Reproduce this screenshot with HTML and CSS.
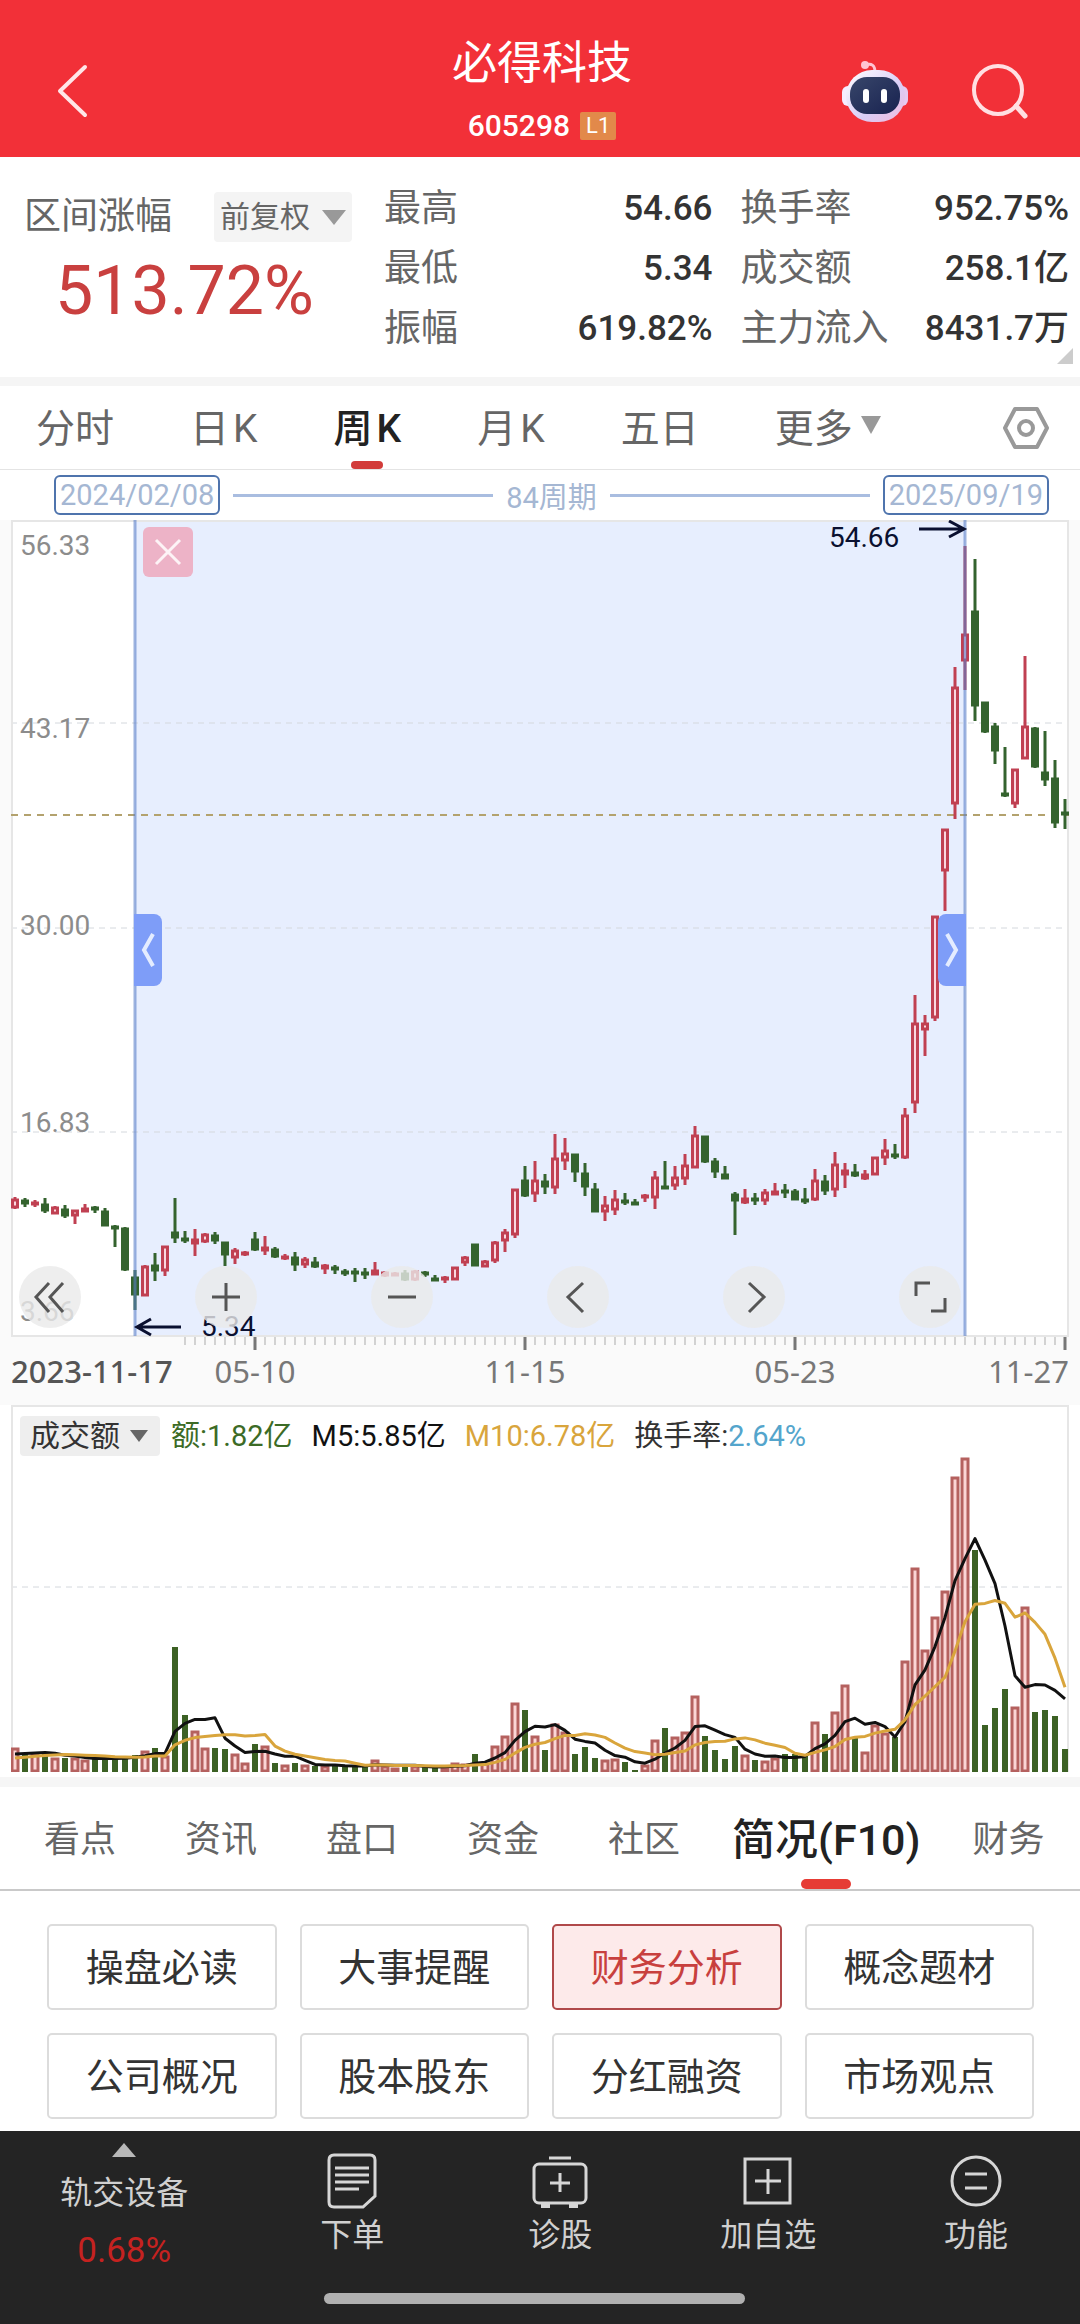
FILE: index.html
```html
<!DOCTYPE html>
<html lang="zh-CN">
<head>
  <meta charset="UTF-8">
  <meta name="viewport" content="width=device-width, initial-scale=1">
  <title>必得科技 605298</title>
  <link rel="stylesheet" href="styles.css">
</head>
<body>

<header class="header">
  <button class="icon-btn back" aria-label="返回">
    <svg width="32" height="54" viewBox="0 0 32 54"><path d="M29 3 L4 27 L29 51" fill="none" stroke="#ffe6e8" stroke-width="4" stroke-linecap="round" stroke-linejoin="round"/></svg>
  </button>
  <div class="title">
    <h1>必得科技</h1>
    <div class="code">605298 <span class="level">L1</span></div>
  </div>
  <div class="header-right">
    <button class="icon-btn" aria-label="智能助手">
      <svg width="70" height="66" viewBox="0 0 70 66">
        <defs>
          <linearGradient id="shell" x1="0" y1="0" x2="1" y2="1"><stop offset="0" stop-color="#fff"/><stop offset=".6" stop-color="#d9cdf6"/><stop offset="1" stop-color="#f3b9dc"/></linearGradient>
          <linearGradient id="visor" x1="0" y1="0" x2="1" y2="1"><stop offset="0" stop-color="#38466a"/><stop offset="1" stop-color="#182250"/></linearGradient>
        </defs>
        <path d="M26 7 C31 5 35 7 35 14" fill="none" stroke="#ffc4d4" stroke-width="3"/>
        <circle cx="25" cy="7" r="4" fill="#ffc4d4"/>
        <rect x="2" y="28" width="12" height="20" rx="6" fill="#f6ecff"/>
        <rect x="56" y="28" width="12" height="20" rx="6" fill="#e6c9f0"/>
        <rect x="6" y="12" width="59" height="52" rx="26" fill="url(#shell)"/>
        <rect x="10" y="19" width="50" height="37" rx="17" fill="url(#visor)"/>
        <rect x="23" y="31" width="6" height="14" rx="3" fill="#fff"/>
        <rect x="41" y="31" width="6" height="14" rx="3" fill="#fff"/>
      </svg>
    </button>
    <button class="icon-btn" aria-label="搜索">
      <svg width="58" height="58" viewBox="0 0 58 58"><circle cx="28" cy="28" r="24" fill="none" stroke="#ffdfe2" stroke-width="4"/><path d="M46 44 L55 54" stroke="#ffdfe2" stroke-width="5" stroke-linecap="round"/></svg>
    </button>
  </div>
</header>

<section class="summary">
  <div class="range">
    <div class="range-top">
      <span class="label">区间涨幅</span>
      <label class="picker adjust"><select aria-label="复权方式"><option>前复权</option></select></label>
    </div>
    <div class="range-value">513.72%</div>
  </div>
  <dl class="stats">
    <div><dt>最高</dt><dd>54.66</dd></div>
    <div><dt>换手率</dt><dd>952.75%</dd></div>
    <div><dt>最低</dt><dd>5.34</dd></div>
    <div><dt>成交额</dt><dd>258.1亿</dd></div>
    <div><dt>振幅</dt><dd>619.82%</dd></div>
    <div><dt>主力流入</dt><dd>8431.7万</dd></div>
  </dl>
  <i class="corner"></i>
</section>

<nav class="periods">
  <button>分时</button>
  <button>日<span>K</span></button>
  <button class="active">周<span>K</span></button>
  <button>月<span>K</span></button>
  <button>五日</button>
  <button class="more">更多</button>
  <button class="settings" aria-label="图表设置">
    <svg width="46" height="44" viewBox="0 0 46 44" fill="none" stroke="#999" stroke-width="4" stroke-linejoin="round"><path d="M12 3 H34 L44 22 L34 41 H12 L2 22 Z"/><circle cx="23" cy="22" r="7"/></svg>
  </button>
</nav>

<div class="interval">
  <span class="date">2024/02/08</span>
  <i></i>
  <span class="count">84周期</span>
  <i></i>
  <span class="date">2025/09/19</span>
</div>

<section class="kline">
  <div class="plot">
    <svg id="price" viewBox="0 0 1058 830"></svg>
    <button class="close" aria-label="关闭区间">
      <svg width="28" height="28" viewBox="0 0 28 28"><path d="M2 2 L26 26 M26 2 L2 26" stroke="#fdf3f6" stroke-width="3"/></svg>
    </button>
    <button class="handle handle-left" aria-label="区间起点">
      <svg width="14" height="36" viewBox="0 0 14 36"><path d="M12 2 L3 18 L12 34" fill="none" stroke="#e4ecff" stroke-width="4"/></svg>
    </button>
    <button class="handle handle-right" aria-label="区间终点">
      <svg width="14" height="36" viewBox="0 0 14 36"><path d="M2 2 L11 18 L2 34" fill="none" stroke="#e4ecff" stroke-width="4"/></svg>
    </button>
    <div class="tools">
      <button aria-label="最早"><svg viewBox="0 0 62 62"><path d="M30 17 L17 31 L30 46 M44 17 L31 31 L44 46"/></svg></button>
      <button aria-label="放大"><svg viewBox="0 0 62 62"><path d="M17 31 H45 M31 17 V45"/></svg></button>
      <button aria-label="缩小"><svg viewBox="0 0 62 62"><path d="M17 31 H45"/></svg></button>
      <button aria-label="左移"><svg viewBox="0 0 62 62"><path d="M36 17 L21 31 L36 46"/></svg></button>
      <button aria-label="右移"><svg viewBox="0 0 62 62"><path d="M26 17 L41 31 L26 46"/></svg></button>
      <button aria-label="全屏"><svg viewBox="0 0 62 62"><path d="M17 30 V17 H31 M46 32 V45 H32"/></svg></button>
    </div>
  </div>
  <div class="dates">
    <b>2023-11-17</b><span>05-10</span><span>11-15</span><span>05-23</span><span>11-27</span>
  </div>
</section>

<section class="volume">
  <div class="legend">
    <label class="picker kind"><select aria-label="指标"><option>成交额</option></select></label>
    <span class="green">额:1.82亿</span>
    <span class="black">M5:5.85亿</span>
    <span class="gold">M10:6.78亿</span>
    <span>换手率:<em>2.64%</em></span>
  </div>
  <svg id="vol" viewBox="0 0 1058 317"></svg>
</section>

<nav class="tabs">
  <a href="#">看点</a>
  <a href="#">资讯</a>
  <a href="#">盘口</a>
  <a href="#">资金</a>
  <a href="#">社区</a>
  <a href="#" class="active">简况(F10)</a>
  <a href="#">财务</a>
</nav>

<section class="f10">
  <button>操盘必读</button>
  <button>大事提醒</button>
  <button class="active">财务分析</button>
  <button>概念题材</button>
  <button>公司概况</button>
  <button>股本股东</button>
  <button>分红融资</button>
  <button>市场观点</button>
</section>

<footer class="bottom">
  <div class="bottom-row">
    <button class="sector">
      <i></i>
      <span>轨交设备</span>
      <strong>0.68%</strong>
    </button>
    <button>
      <svg width="56" height="56" viewBox="0 0 56 56"><path d="M10 2 H46 Q51 2 51 7 V43 L39 54 H10 Q5 54 5 49 V7 Q5 2 10 2 Z M11 15 H45 M11 22 H45 M11 29 H45 M11 36 H35"/></svg>
      <span>下单</span>
    </button>
    <button>
      <svg width="56" height="56" viewBox="0 0 56 56"><path d="M17 5 H39 M28 20 V39 M18 30 H38"/><rect x="2" y="11" width="52" height="39" rx="5"/><path d="M9 53 H18 M37 53 H46" stroke-width="4"/></svg>
      <span>诊股</span>
    </button>
    <button>
      <svg width="56" height="56" viewBox="0 0 56 56"><rect x="5" y="6" width="45" height="44"/><path d="M28 16 V41 M15 28 H41"/></svg>
      <span>加自选</span>
    </button>
    <button>
      <svg width="56" height="56" viewBox="0 0 56 56"><circle cx="28" cy="28" r="24"/><path d="M17 21 H39 M17 35 H39"/></svg>
      <span>功能</span>
    </button>
  </div>
  <div class="home-bar"></div>
</footer>

<script src="chart.js"></script>
</body>
</html>
```
FILE: styles.css
```css
* { box-sizing: border-box; }
body {
  margin: 0;
  background: #fff;
  color: #333;
  font-family: Roboto, "Noto Sans CJK SC", sans-serif;
}
button, select {
  font: inherit;
  color: inherit;
  background: none;
  border: none;
  padding: 0;
  cursor: pointer;
}
svg { display: block; }

.header {
  display: grid;
  grid-template-columns: 1fr auto 1fr;
  align-items: center;
  height: 157px;
  padding: 24px 52px 0 56px;
  background: #f23038;
  color: #fff;
}
.back { justify-self: start; }
.title { padding-top: 6px; text-align: center; }
.title h1 {
  margin: 0;
  font-size: 45px;
  line-height: 64px;
  font-weight: 400;
}
.code {
  display: flex;
  align-items: center;
  justify-content: center;
  gap: 10px;
  font-size: 30px;
  line-height: 60px;
  font-weight: 500;
}
.level {
  padding: 0 6px;
  font-size: 22px;
  line-height: 28px;
  font-weight: 400;
  background: #e2894a;
  border-radius: 2px;
}
.header-right {
  display: flex;
  align-items: center;
  justify-content: flex-end;
  gap: 60px;
}

.summary {
  position: relative;
  display: flex;
  height: 229px;
  padding: 22px 11px 0 24px;
  border-bottom: 9px solid #f5f5f5;
}
.range { width: 328px; padding-top: 12px; }
.range-top {
  display: flex;
  align-items: center;
  justify-content: space-between;
}
.label { font-size: 37px; line-height: 52px; color: #666; }
.picker { display: flex; align-items: center; background: #f4f4f4; border-radius: 4px; }
.picker select { appearance: none; }
.picker::after {
  content: "";
  border: 12px solid transparent;
  border-top: 15px solid #999;
  border-bottom: 0;
}
.adjust {
  gap: 12px;
  padding: 0 6px;
  font-size: 30px;
  line-height: 50px;
  color: #666;
}
.range-value {
  padding-left: 31px;
  font-size: 68px;
  line-height: 96px;
  color: #c9403f;
}
.stats {
  flex: 1;
  display: grid;
  grid-template-columns: 1fr 1fr;
  column-gap: 28px;
  align-content: start;
  margin: 0 0 0 32px;
}
.stats div { display: flex; justify-content: space-between; line-height: 60px; white-space: nowrap; }
.stats dt { font-size: 37px; color: #666; }
.stats dd { margin: 0; font-size: 35px; font-weight: 500; }
.corner {
  position: absolute;
  right: 7px;
  bottom: 13px;
  border-left: 16px solid transparent;
  border-bottom: 16px solid #ccc;
}

.periods {
  display: flex;
  gap: 76px;
  height: 84px;
  padding: 0 31px 0 36px;
  border-bottom: 1px solid #e4e4e4;
  font-size: 39px;
  color: #666;
}
.periods button { position: relative; padding-bottom: 5px; white-space: nowrap; }
.periods span { margin-left: 4px; }
.periods .active { color: #222; font-weight: 500; }
.periods .active::after {
  content: "";
  position: absolute;
  left: 50%;
  bottom: 0;
  width: 32px;
  height: 8px;
  margin-left: -16px;
  border-radius: 4px;
  background: #d23c3a;
}
.more { display: flex; align-items: center; gap: 8px; }
.more::after {
  content: "";
  border: 10px solid transparent;
  border-top: 18px solid #999;
  border-bottom: 0;
}
.periods .settings { margin-left: auto; padding-bottom: 0; }

.interval {
  display: flex;
  align-items: center;
  gap: 13px;
  height: 50px;
  padding: 0 31px 0 54px;
  font-size: 29px;
  color: #a5b7d3;
}
.interval i { flex: 1; height: 3px; background: #a9bde0; }
.date {
  padding: 0 4px;
  line-height: 36px;
  border: 2px solid #4f74ad;
  border-radius: 6px;
}

.kline { padding-bottom: 13px; background: #fafafa; }
.plot { position: relative; padding: 0 11px; }
.plot > svg, .volume > svg { width: 100%; height: auto; }
.close {
  position: absolute;
  left: 143px;
  top: 7px;
  display: grid;
  place-items: center;
  width: 50px;
  height: 50px;
  border-radius: 6px;
  background: #edb3c7;
}
.handle {
  position: absolute;
  top: 394px;
  display: grid;
  place-items: center;
  width: 28px;
  height: 72px;
  background: #7e9df8;
}
.handle-left { left: 12.4%; border-radius: 0 8px 8px 0; }
.handle-right { right: 10.6%; border-radius: 8px 0 0 8px; }
.tools {
  position: absolute;
  left: 19px;
  right: 119px;
  bottom: 22px;
  display: flex;
  justify-content: space-between;
}
.tools button {
  width: 62px;
  height: 62px;
  border-radius: 50%;
  background: rgba(234, 234, 234, 0.8);
}
.tools path { fill: none; stroke: #555; stroke-width: 3; }
/* columns are centred on the long ticks of the axis */
.dates {
  display: grid;
  grid-template-columns: minmax(0, 109fr) repeat(3, minmax(0, 270fr)) minmax(0, 139fr);
  padding: 0 11px;
  font-family: "Noto Sans", sans-serif;
  font-size: 31px;
  line-height: 42px;
  text-align: center;
  white-space: nowrap;
  color: #777;
}
.dates b { text-align: left; font-weight: 500; color: #555; }
.dates span:last-child { text-align: right; }

.grid { stroke: #d4d8dd; stroke-dasharray: 6 5; }
.last-price { stroke: #b3a26e; stroke-width: 2; stroke-dasharray: 7 6; }
.frame { fill: none; stroke: #e6e6e6; stroke-width: 2; }
.select { fill: #e7eefe; }
.edge { stroke: #5a7fc8; stroke-opacity: 0.6; stroke-width: 3; }
.up { fill: #fbd7df; stroke: #c04052; stroke-width: 3; }
.down { fill: #34632e; stroke: #34632e; stroke-width: 3; }
.axis { font-size: 28px; fill: #8c8c8c; }
.mark { font-size: 28px; fill: #0a1030; }
.arrow { fill: none; stroke: #0a1030; stroke-width: 3; }
.tick { stroke: #aaa; }
.tick-big { stroke: #777; stroke-width: 3; }
.vol-up { fill: #fbd5d5; stroke: #b5615f; stroke-width: 3; }
.vol-down { fill: #3c6124; }
.ma5, .ma10 { fill: none; stroke: #111; stroke-width: 3; stroke-linejoin: round; }
.ma10 { stroke: #d9a53c; }

.volume {
  padding: 0 11px 5px;
  border-bottom: 10px solid #f6f6f6;
}
.legend {
  display: flex;
  align-items: center;
  gap: 19px;
  height: 50px;
  padding: 9px 7px 0;
  font-size: 29px;
  line-height: 40px;
  white-space: nowrap;
  border: 2px solid #e6e6e6;
  border-bottom: 0;
}
.legend em { font-style: normal; color: #54a5cc; }
.kind { gap: 10px; margin-right: -8px; padding: 0 12px 0 10px; font-size: 30px; background: #eee; }
.kind::after { border-width: 12px 9px 0; border-top-color: #666; }
.green { color: #3c6b26; }
.black { color: #111; }
.gold { color: #d9a53c; }

.tabs {
  display: flex;
  align-items: center;
  gap: 1px;
  height: 104px;
  padding-left: 10px;
  border-bottom: 2px solid #c9c9c9;
  font-size: 36px;
  white-space: nowrap;
}
.tabs a {
  position: relative;
  padding: 4px 34px 0;
  line-height: 98px;
  color: #666;
  text-decoration: none;
}
.tabs .active { padding: 4px 17px 0; font-size: 43px; font-weight: 500; color: #222; }
.tabs .active::after {
  content: "";
  position: absolute;
  left: 50%;
  bottom: 0;
  width: 50px;
  height: 10px;
  margin-left: -25px;
  border-radius: 5px;
  background: #e63c35;
}

.f10 {
  display: grid;
  grid-template-columns: repeat(4, 1fr);
  gap: 23px;
  padding: 33px 46px 12px 47px;
}
.f10 button {
  height: 86px;
  padding-bottom: 6px;
  font-size: 38px;
  border: 2px solid #dcdcdc;
  border-radius: 5px;
}
.f10 .active { color: #c8403e; background: #fdeaea; border-color: #b0494a; }

.bottom { height: 193px; padding-top: 12px; background: #242424; color: #d0d0d0; }
.bottom-row { display: flex; height: 150px; font-size: 32px; }
.bottom button {
  flex: 1;
  display: flex;
  flex-direction: column;
  align-items: center;
  gap: 4px;
  padding-top: 10px;
  line-height: 44px;
}
.bottom svg { fill: none; stroke: #d6d6d6; stroke-width: 3; }
.bottom .sector { flex: 0 0 23%; gap: 14px; padding-top: 0; }
.sector i { border: 12px solid transparent; border-top: 0; border-bottom: 14px solid #b8b8b8; }
.sector strong { font-size: 35px; font-weight: 400; color: #c52220; }
.home-bar { width: 39%; height: 11px; margin-left: 30%; border-radius: 6px; background: #b0b0b0; }
```
FILE: chart.js
```js
// weekly candles: colour, high, low, body top, body bottom (plot units, y down)
const candles = `r677,689,679,688 g678,687,680,684 r680,687,682,685 g678,693,684,691 r686,694,687,694
g685,698,689,696 r690,704,690,696 r684,692,688,692 g686,693,687,690 g688,706,691,706
g705,727,706,708 g707,751,708,750 g750,790,757,775 r745,776,746,776 g733,761,745,751
r726,756,726,751 g678,723,712,718 g711,723,718,721 r709,736,719,724 r713,723,714,722
g712,724,715,721 g722,746,722,735 r728,744,730,738 r731,736,732,735 g712,731,719,730
r716,735,727,731 g727,738,729,737 r734,740,736,739 g732,751,737,745 r737,748,739,745
g737,748,742,747 r744,754,745,749 g745,754,747,749 g749,756,751,753 g748,762,751,753
g748,759,752,754 r742,755,750,755 r751,757,752,756 r752,756,753,755 g750,761,753,760
r750,761,751,760 g751,757,752,754 g755,761,758,761 r756,763,757,760 r747,760,747,760
r736,746,737,743 g724,746,724,746 r740,747,741,747 r721,743,722,741 r709,732,712,721
r669,718,669,715 g646,677,660,676 r641,682,660,674 g654,674,661,667 r614,674,638,668
r618,650,633,641 g634,662,634,652 g643,676,653,667 g663,692,669,692 r676,701,685,692
r670,695,679,690 g673,685,680,682 g679,685,682,684 r674,682,675,678 r651,689,657,678
g641,669,666,668 r646,670,657,666 r634,665,645,659 r606,648,615,648 g616,643,616,642
g638,658,641,652 g646,659,654,659 g672,715,674,681 r669,684,678,683 g673,685,678,681
r669,685,672,681 r663,675,671,675 g664,678,670,673 g669,680,671,680 g668,684,679,681
r649,681,660,680 g655,675,661,671 r632,677,644,670 r643,668,650,655 g644,657,652,656
r650,660,654,659 r637,655,637,655 r619,645,630,638 g624,639,634,636 r588,639,595,638
r475,593,503,583 r495,536,503,510 r396,501,396,498 r309,391,309,351 r147,299,167,284
r26,170,114,141 g39,201,91,186 g182,213,182,212 g203,244,206,231 g227,277,273,275
r249,288,249,284 r136,239,206,239 g207,248,208,247 g211,266,252,260 g240,308,258,303
g279,309,292,295`.split(/\s+/).map(s => ({ up: s[0] === "r", v: s.slice(1).split(",").map(Number) }));

const volumes = [
  24,18,19,19,14,14,14,12,14,13,15,15,17,21,24,16,125,57,41,24,24,23,18,9,28,26,9,7,9,7,6,6,7,5,6,6,12,6,4,6,
  6,5,4,5,9,8,18,9,26,36,69,62,36,22,48,40,18,25,14,12,13,10,2,7,32,44,35,40,76,36,22,13,26,17,12,11,14,18,18,17,
  50,38,60,87,34,20,47,39,35,111,204,122,155,181,295,314,222,47,64,83,65,165,60,62,56,23
];
// turnover of the weeks just before the first one shown, for the averages
const before = [10,10,10,10,10,16,16,17,17];

const x = i => 4 + i * 10;
const line = (cls, x1, y1, x2, y2) => `<line class="${cls}" x1="${x1}" y1="${y1}" x2="${x2}" y2="${y2}"/>`;

function drawPrice() {
  let s = '<rect width="1058" height="816" fill="#fff"/><rect class="select" x="124" width="830" height="816"/>';
  s += [203, 408, 612].map(y => line("grid", 0, y, 1058, y)).join("");
  s += '<rect class="frame" x="1" y="1" width="1056" height="815"/>';
  s += line("last-price", 0, 295, 1058, 295);
  [["56.33", 35], ["43.17", 218], ["30.00", 415], ["16.83", 612], ["3.66", 801]].forEach(([t, y]) => {
    s += `<text class="axis" x="9" y="${y}">${t}</text>`;
  });
  candles.forEach((c, i) => {
    const [h, l, t, b] = c.v;
    const cls = c.up ? "up" : "down";
    s += line(cls, x(i), h, x(i), l);
    s += `<rect class="${cls}" x="${x(i) - 2.5}" y="${t + 1}" width="5" height="${Math.max(b - t - 2, 1)}"/>`;
  });
  s += line("edge", 124, 0, 124, 816) + line("edge", 954, 0, 954, 816);
  s += '<text class="mark" x="818" y="27">54.66</text><path class="arrow" d="M908 9 H953 M938 1 L953 9 L938 17"/>';
  s += '<text class="mark" x="190" y="816">5.34</text><path class="arrow" d="M170 807 H126 M140 799 L126 807 L140 815"/>';
  s += '<rect y="817" width="1058" height="13" fill="#fafafa"/>';
  for (let i = 17; i < 106; i++) {
    s += (i - 24) % 27 === 0 ? line("tick-big", x(i), 817, x(i), 830) : line("tick", x(i), 817, x(i), 825);
  }
  document.getElementById("price").innerHTML = s;
}

function average(n) {
  const all = before.concat(volumes);
  return volumes.map((_, i) => {
    const end = i + before.length + 1;
    const sum = all.slice(end - n, end).reduce((a, b) => a + b, 0);
    return `${x(i)},${(317 - sum / n).toFixed(1)}`;
  }).join(" ");
}

function drawVolume() {
  let s = line("grid", 0, 132, 1058, 132) + line("frame", 1, 0, 1, 317) + line("frame", 1057, 0, 1057, 317);
  volumes.forEach((v, i) => {
    s += candles[i].up
      ? `<rect class="vol-up" x="${x(i) - 3}" y="${318 - v}" width="6" height="${Math.max(v - 2, 1)}"/>`
      : `<rect class="vol-down" x="${x(i) - 3}" y="${317 - v}" width="6" height="${v}"/>`;
  });
  s += `<polyline class="ma5" points="${average(5)}"/><polyline class="ma10" points="${average(10)}"/>`;
  document.getElementById("vol").innerHTML = s;
}

drawPrice();
drawVolume();
```
